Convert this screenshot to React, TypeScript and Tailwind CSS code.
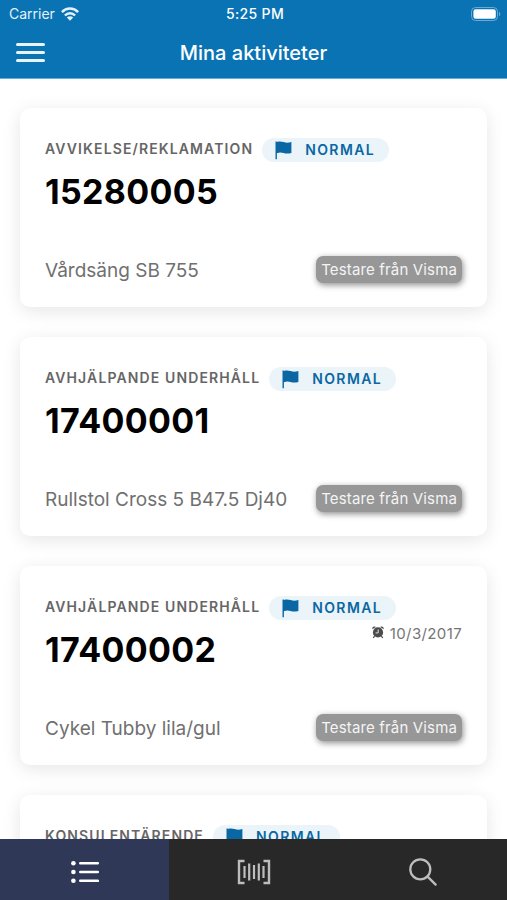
type Activity = {
  kind: string;
  id: string;
  item: string;
  due?: string;
};

const activities: Activity[] = [
  { kind: "AVVIKELSE/REKLAMATION", id: "15280005", item: "Vårdsäng SB 755" },
  { kind: "AVHJÄLPANDE UNDERHÅLL", id: "17400001", item: "Rullstol Cross 5 B47.5 Dj40" },
  { kind: "AVHJÄLPANDE UNDERHÅLL", id: "17400002", item: "Cykel Tubby lila/gul", due: "10/3/2017" },
  { kind: "KONSULENTÄRENDE", id: "", item: "" },
];

function WifiIcon() {
  return (
    <svg width="18" height="14" viewBox="0 0 18 14" fill="none" stroke="currentColor" strokeWidth="2.5" aria-hidden="true">
      <path d="M0.9 5.1C5.4 0.4 12.6 0.4 17.1 5.1" />
      <path d="M3.9 8.5C6.8 5.5 11.2 5.5 14.1 8.5" />
      <path d="M9 13.8L5.8 10.6C7.6 8.9 10.4 8.9 12.2 10.6Z" fill="currentColor" stroke="none" />
    </svg>
  );
}

function BatteryIcon() {
  return (
    <svg width="30" height="14" viewBox="0 0 30 14" aria-hidden="true">
      <rect x="0.5" y="0.5" width="26" height="13" rx="4" fill="none" stroke="#6aaad2" />
      <rect x="2.4" y="2.2" width="22.4" height="9.6" rx="2.2" fill="#fff" />
      <path d="M28 4.8C29.8 5.6 29.8 8.4 28 9.2Z" fill="#6aaad2" />
    </svg>
  );
}

function FlagIcon() {
  return (
    <svg width="17" height="19" viewBox="0 0 17 19" fill="currentColor" aria-hidden="true">
      <path d="M0.5 0.6H1.9V1C4.5 0.1 6.3 0.5 8.6 1.1C11.2 1.8 13.4 1.8 16.4 1.1V11.9C13.4 12.8 11.2 12.8 8.6 12.1C6.3 11.4 4.5 11.3 1.9 12.2V18.3H0.5Z" />
    </svg>
  );
}

function AlarmIcon() {
  return (
    <svg width="12" height="13" viewBox="0 0 12 13" aria-hidden="true">
      <path d="M0.4 3.2C-0.1 1 2 -0.2 3.8 0.9ZM11.6 3.2C12.1 1 10 -0.2 8.2 0.9Z" fill="#4a4a4a" />
      <circle cx="6" cy="6.4" r="5.1" fill="#4a4a4a" />
      <path d="M2.6 10L1.3 12M9.4 10L10.7 12" stroke="#4a4a4a" strokeWidth="1.3" />
      <path d="M6.2 3.4V6.9H3.6" fill="none" stroke="#ddd" strokeWidth="1" />
    </svg>
  );
}

function ActivityCard({ kind, id, item, due }: Activity) {
  return (
    <article className="flex h-[199px] shrink-0 flex-col rounded-[10px] bg-white px-[25px] pt-[30px] pb-[22px] shadow-[0_4px_18px_rgba(0,0,0,0.1)]">
      <div className="flex items-start gap-[9px]">
        <span className="text-[14px] leading-[22px] font-semibold tracking-[0.08em] whitespace-nowrap text-[#666]">{kind}</span>
        <span className="flex h-6 items-center gap-[13px] rounded-full bg-[#ebf4f9] pr-[14px] pl-[13px] text-[#0a67a3]">
          <FlagIcon />
          <span className="text-[14px] leading-6 font-semibold tracking-widest">NORMAL</span>
        </span>
      </div>
      <div className="flex items-start justify-between">
        <h2 className="pt-2 text-[34px] leading-11 font-bold tracking-[0.01em] text-black">{id}</h2>
        {due && (
          <span className="flex items-start gap-[6px] pt-[2px] text-[15px] leading-6 tracking-wide text-[#757575]">
            <span className="pt-1">
              <AlarmIcon />
            </span>
            <time dateTime="2017-10-03">{due}</time>
          </span>
        )}
      </div>
      {item && (
        <div className="mt-auto flex items-center justify-between">
          <p className="pt-1 text-[19px] leading-7 whitespace-nowrap text-[#707070]">{item}</p>
          <span className="rounded-[7px] bg-[#979797] px-[5px] text-[15px] leading-[27px] tracking-[0.01em] whitespace-nowrap text-[#f4f4f4] shadow-[1px_2px_6px_rgba(0,0,0,0.45)]">
            Testare från Visma
          </span>
        </div>
      )}
    </article>
  );
}

export default function App() {
  return (
    <div className="flex h-screen flex-col bg-white font-['Inter',sans-serif]">
      <header className="shrink-0 border-b border-[#5fb0dd] bg-[#0a73b3] text-white">
        <div className="grid h-[27px] grid-cols-3 items-center pr-[6px] pl-[9px]">
          <span className="flex items-center gap-[6px] text-[14px] text-[#e3f1f9]">
            Carrier
            <WifiIcon />
          </span>
          <span className="text-center text-[14px] font-medium tracking-wide">5:25 PM</span>
          <span className="flex justify-end">
            <BatteryIcon />
          </span>
        </div>
        <div className="grid h-[51px] grid-cols-[1fr_auto_1fr] items-center px-4">
          <button type="button" aria-label="Meny" className="flex w-[29px] flex-col gap-[5px]">
            <span className="h-[3px] rounded-full bg-[#e8f4fb]" />
            <span className="h-[3px] rounded-full bg-[#e8f4fb]" />
            <span className="h-[3px] rounded-full bg-[#e8f4fb]" />
          </button>
          <h1 className="text-[20px] font-medium">Mina aktiviteter</h1>
        </div>
      </header>

      <main className="flex min-h-0 flex-1 flex-col gap-[30px] overflow-hidden px-5 pt-[29px]">
        {activities.map((activity, index) => (
          <ActivityCard key={index} {...activity} />
        ))}
      </main>

      <nav className="grid h-[61px] shrink-0 grid-cols-3 bg-[#282828] text-[#bdbdbd]">
        <button type="button" aria-label="Lista" aria-current="page" className="flex items-center justify-center bg-[#2f3857] pt-1 text-white">
          <svg width="28" height="24" viewBox="0 0 28 24" stroke="currentColor" strokeWidth="2.6" strokeLinecap="round" aria-hidden="true">
            <path d="M9.3 3.2H26.8M9.3 12H26.8M9.3 20.8H26.8" />
            <g fill="currentColor" stroke="none">
              <circle cx="2.4" cy="3.2" r="2.3" />
              <circle cx="2.4" cy="12" r="2.3" />
              <circle cx="2.4" cy="20.8" r="2.3" />
            </g>
          </svg>
        </button>
        <button type="button" aria-label="Streckkod" className="flex items-center justify-center pt-1">
          <svg width="34" height="26" viewBox="0 0 34 26" fill="none" stroke="currentColor" strokeWidth="2.4" aria-hidden="true">
            <path d="M7.5 2H2V24H7.5M26.5 2H32V24H26.5" />
            <path d="M7.5 7V19M12.2 4.5V21.5M17 6V20M21.8 4.5V21.5M26.5 7V19" strokeWidth="2.2" />
          </svg>
        </button>
        <button type="button" aria-label="Sök" className="flex items-center justify-center pt-1">
          <svg width="28" height="28" viewBox="0 0 28 28" fill="none" stroke="currentColor" strokeWidth="2.3" strokeLinecap="round" aria-hidden="true">
            <circle cx="11.3" cy="11.3" r="10" />
            <path d="M18.6 18.6L26.6 26.6" />
          </svg>
        </button>
      </nav>
    </div>
  );
}
